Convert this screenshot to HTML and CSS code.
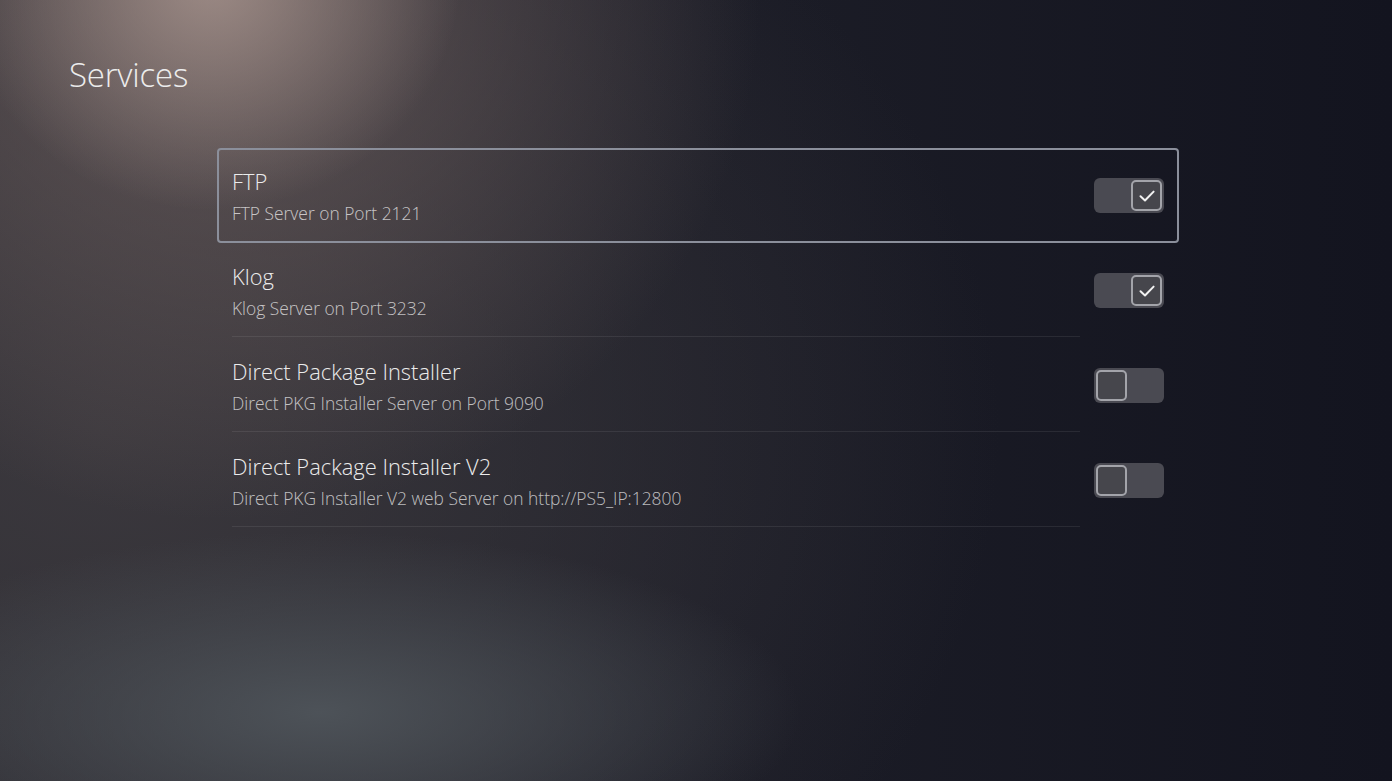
FILE: index.html
```html
<!DOCTYPE html>
<html lang="en">
<head>
<meta charset="utf-8">
<title>Services</title>
<link rel="stylesheet" href="styles.css">
</head>
<body>
<div class="screen">
  <h1 class="page-title">Services</h1>
  <ul class="list">
    <li class="row focused">
      <div class="text">
        <div class="title">FTP</div>
        <div class="sub">FTP Server on Port 2121</div>
      </div>
      <div class="toggle on"><span class="knob"><svg viewBox="0 0 24 24" width="24" height="24"><path d="M5.5 12.3 L10 16.5 L18.6 7.6" fill="none" stroke="#f2f2f2" stroke-width="2" stroke-linecap="round" stroke-linejoin="round"/></svg></span></div>
    </li>
    <li class="row">
      <div class="text">
        <div class="title">Klog</div>
        <div class="sub">Klog Server on Port 3232</div>
      </div>
      <div class="toggle on"><span class="knob"><svg viewBox="0 0 24 24" width="24" height="24"><path d="M5.5 12.3 L10 16.5 L18.6 7.6" fill="none" stroke="#f2f2f2" stroke-width="2" stroke-linecap="round" stroke-linejoin="round"/></svg></span></div>
    </li>
    <li class="row">
      <div class="text">
        <div class="title">Direct Package Installer</div>
        <div class="sub">Direct PKG Installer Server on Port 9090</div>
      </div>
      <div class="toggle"><span class="knob"></span></div>
    </li>
    <li class="row">
      <div class="text">
        <div class="title">Direct Package Installer V2</div>
        <div class="sub">Direct PKG Installer V2 web Server on http://PS5_IP:12800</div>
      </div>
      <div class="toggle"><span class="knob"></span></div>
    </li>
  </ul>
</div>
</body>
</html>
```
FILE: styles.css
```css
* { box-sizing: border-box; }
html, body { margin: 0; padding: 0; }
body {
  width: 1392px;
  height: 781px;
  overflow: hidden;
  font-family: "Open Sans", "Noto Sans", sans-serif;
  color: #e9e9ea;
  background-color: #131420;
  background-image:
    radial-gradient(ellipse 250px 230px at 210px -20px, rgba(175,155,148,0.75), rgba(175,155,148,0) 100%),
    radial-gradient(ellipse 540px 520px at 220px 0px, rgba(120,104,102,0.7), rgba(120,104,102,0) 100%),
    radial-gradient(ellipse 480px 180px at 320px 712px, rgba(80,86,92,0.9), rgba(80,86,92,0) 100%),
    radial-gradient(ellipse 900px 720px at 100px 430px, rgba(60,57,62,0.95), rgba(60,57,62,0) 100%),
    linear-gradient(90deg, #292930 0%, #1c1d27 50%, #13141f 100%);
}
.screen {
  padding: 52px 0 0 69px;
}
.page-title {
  margin: 0;
  font-size: 33px;
  font-weight: 300;
  line-height: 46px;
  color: #ececec;
  letter-spacing: -0.2px;
}
.list {
  list-style: none;
  margin: 50px 0 0 148px;
  padding: 0;
  width: 962px;
}
.row {
  display: flex;
  align-items: stretch;
  height: 95px;
  padding: 0 13px;
  border: 2px solid transparent;
  border-radius: 4px;
}
.row.focused {
  border-color: #8b8f9b;
}
.text {
  flex: 1;
  padding-top: 20px;
  border-bottom: 1px solid rgba(255,255,255,0.08);
  margin-bottom: -1px;
  margin-right: 14px;
}
.row.focused .text { border-bottom-color: transparent; }
.title {
  font-size: 21.9px;
  font-weight: 300;
  line-height: 24px;
  color: #ececec;
}
.sub {
  margin-top: 9px;
  font-size: 17.4px;
  font-weight: 300;
  line-height: 20px;
  color: rgba(255,255,255,0.7);
}
.toggle {
  align-self: center;
  width: 70px;
  height: 35px;
  border-radius: 6px;
  background: #4a4a52;
  padding: 2px;
  display: flex;
  justify-content: flex-start;
}
.toggle.on { justify-content: flex-end; }
.knob {
  width: 31px;
  height: 31px;
  border-radius: 5px;
  border: 2px solid #a3a4aa;
  background: #46464c;
  display: flex;
  align-items: center;
  justify-content: center;
}
```
